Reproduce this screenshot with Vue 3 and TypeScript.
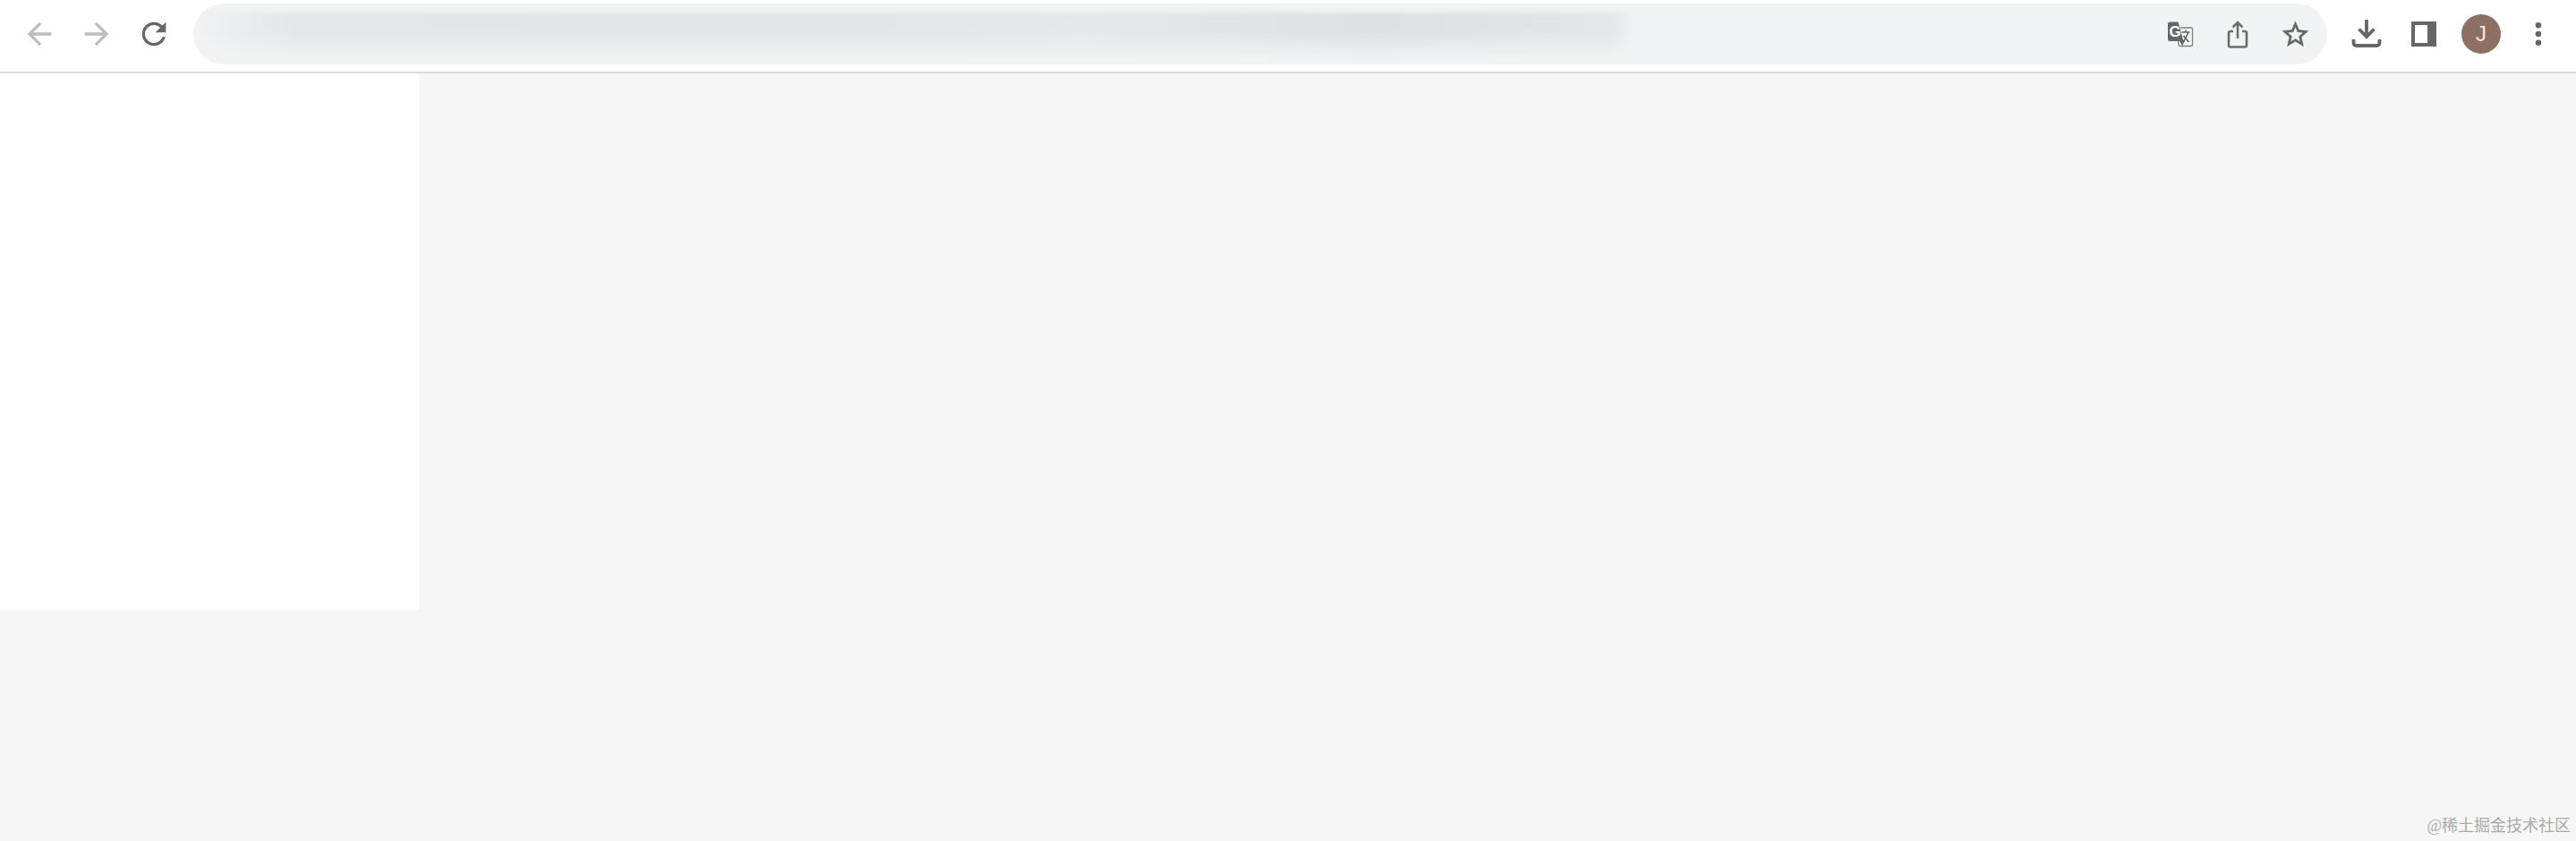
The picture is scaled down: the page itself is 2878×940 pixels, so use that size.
<script setup lang="ts">
const watermark = '@稀土掘金技术社区';
const avatarLetter = 'J';
</script>

<template>
  <div class="window">
    <header class="toolbar">
      <button class="icon-btn is-disabled" aria-label="Back">
        <svg viewBox="0 0 24 24"><path d="M20 11H7.83l5.59-5.59L12 4l-8 8 8 8 1.41-1.41L7.83 13H20v-2z" /></svg>
      </button>
      <button class="icon-btn is-disabled" aria-label="Forward">
        <svg viewBox="0 0 24 24"><path d="M4 11h12.17l-5.59-5.59L12 4l8 8-8 8-1.41-1.41L16.17 13H4v-2z" /></svg>
      </button>
      <button class="icon-btn" aria-label="Reload">
        <svg viewBox="0 0 24 24"><path d="M17.65 6.35C16.2 4.9 14.21 4 12 4c-4.42 0-7.99 3.58-7.99 8s3.57 8 7.99 8c3.73 0 6.84-2.55 7.73-6h-2.08c-.82 2.33-3.04 4-5.65 4-3.31 0-6-2.69-6-6s2.69-6 6-6c1.66 0 3.14.69 4.22 1.78L13 11h7V4l-2.35 2.35z" /></svg>
      </button>

      <div class="omnibox">
        <div class="blurred-url"></div>
        <div class="omnibox-actions">
          <button class="icon-btn" aria-label="Translate">
            <svg viewBox="0 0 40 40">
              <rect x="18" y="13" width="15.5" height="20.5" rx="1.5" fill="#f4f5f5" stroke="#7b7f83" stroke-width="1.3" />
              <path d="M6 8.5a2 2 0 0 1 2-2h9.500l6 21.500H8a2 2 0 0 1-2-2z" />
              <path d="M19 27l3 6.500 3-6.500z" />
              <text x="7.5" y="23" class="translate-g">G</text>
              <path class="translate-x" d="M21.500 18h9M26 15.500v2.500M23 30l6-12M23.500 22l6 7" />
            </svg>
          </button>
          <button class="icon-btn" aria-label="Share">
            <svg viewBox="0 0 40 40" class="stroked">
              <path d="M15 17h-3a2 2 0 0 0-2 2v13.500a2 2 0 0 0 2 2h16a2 2 0 0 0 2-2V19a2 2 0 0 0-2-2h-3" />
              <path d="M20 25V8M14.500 12.500 20 7l5.500 5.500" />
            </svg>
          </button>
          <button class="icon-btn" aria-label="Bookmark">
            <svg viewBox="0 0 24 24" class="star"><path d="M22 9.24l-7.19-.62L12 2 9.19 8.63 2 9.24l5.46 4.73L5.82 21 12 17.27 18.18 21l-1.63-7.03L22 9.24zM12 15.4l-3.76 2.27 1-4.28-3.32-2.88 4.38-.38L12 6.1l1.71 4.04 4.38.38-3.32 2.88 1 4.28L12 15.4z" /></svg>
          </button>
        </div>
      </div>

      <div class="toolbar-actions">
        <button class="icon-btn" aria-label="Downloads">
          <svg viewBox="0 0 40 40" class="stroked thick">
            <path d="M20 4v19M11.500 14.500 20 23l8.500-8.500" />
            <path d="M5.500 26v4a3 3 0 0 0 3 3h23a3 3 0 0 0 3-3v-4" />
          </svg>
        </button>
        <button class="icon-btn" aria-label="Side panel">
          <svg viewBox="0 0 40 40"><path fill-rule="evenodd" d="M6 6h28v28H6zM10 10v20h14V10z" /></svg>
        </button>
        <button class="icon-btn" aria-label="Profile">
          <span class="avatar">{{ avatarLetter }}</span>
        </button>
        <button class="icon-btn" aria-label="Menu">
          <svg viewBox="0 0 40 40">
            <circle cx="20" cy="10.3" r="3.3" />
            <circle cx="20" cy="20" r="3.3" />
            <circle cx="20" cy="29.7" r="3.3" />
          </svg>
        </button>
      </div>
    </header>

    <main class="page">
      <aside class="sidebar"></aside>
      <span class="watermark">{{ watermark }}</span>
    </main>
  </div>
</template>

<style>
html,
body {
  margin: 0;
  background: #f6f6f6;
}
</style>

<style scoped>
.window {
  display: flex;
  flex-direction: column;
  height: 940px;
  overflow: hidden;
}

.toolbar {
  display: flex;
  flex: none;
  align-items: center;
  box-sizing: border-box;
  height: 82px;
  padding: 0 10px 4px 12px;
  background: #fff;
  border-bottom: 2px solid #dadada;
}

.icon-btn {
  display: flex;
  flex: none;
  align-items: center;
  justify-content: center;
  width: 64px;
  height: 64px;
  padding: 0;
  background: none;
  border: 0;
}

.icon-btn svg {
  width: 40px;
  height: 40px;
  fill: #646668;
}

.icon-btn.is-disabled svg {
  fill: #bdbdbd;
}

.icon-btn svg.star {
  width: 35px;
  height: 35px;
  stroke: #646668;
  stroke-width: 0.3;
}

.icon-btn svg.stroked {
  fill: none;
  stroke: #6c6f72;
  stroke-width: 2.6;
}

.icon-btn svg.thick {
  stroke: #646668;
  stroke-width: 3.8;
}

.translate-g {
  fill: #fff;
  font-family: "Liberation Sans", sans-serif;
  font-size: 17px;
  font-weight: 700;
}

.translate-x {
  fill: none;
  stroke: #646668;
  stroke-width: 1.6;
}

.omnibox {
  display: flex;
  flex: none;
  align-items: center;
  justify-content: space-between;
  width: 2384px;
  height: 68px;
  margin-left: 12px;
  padding-right: 4px;
  box-sizing: border-box;
  overflow: hidden;
  background: #f1f3f4;
  border-radius: 34px;
}

.blurred-url {
  flex: none;
  align-self: flex-start;
  width: 1604px;
  height: 52px;
  margin-top: 10px;
  background:
    linear-gradient(to bottom, rgba(241, 243, 244, 0) 42%, rgba(241, 243, 244, 0.95) 100%),
    linear-gradient(
      to right,
      rgba(227, 228, 230, 0) 0,
      rgba(232, 234, 235, 0.7) 3%,
      #e5e6e8 7%,
      #e4e5e7 45%,
      #e7e8ea 62%,
      #dfe0e2 82%,
      #e3e4e6 94%,
      #e6e7e9 99%,
      rgba(230, 231, 233, 0.3) 100%
    );
  filter: blur(2px);
}

.omnibox-actions,
.toolbar-actions {
  display: flex;
  flex: none;
}

.toolbar-actions {
  margin-left: 12px;
}

.avatar {
  display: flex;
  align-items: center;
  justify-content: center;
  width: 44px;
  height: 44px;
  color: #f7e9df;
  font-family: "Liberation Sans", sans-serif;
  font-size: 24px;
  background: #8e6f63;
  border-radius: 50%;
}

.page {
  position: relative;
  flex: 1;
  background: #f6f6f6;
}

.sidebar {
  width: 468px;
  height: 600px;
  background: #fff;
}

.watermark {
  position: absolute;
  right: 6px;
  bottom: 7px;
  color: #a9a9a9;
  font-family: "Liberation Serif", "Noto Sans CJK SC", serif;
  font-size: 18px;
  line-height: 20px;
  white-space: nowrap;
}
</style>
